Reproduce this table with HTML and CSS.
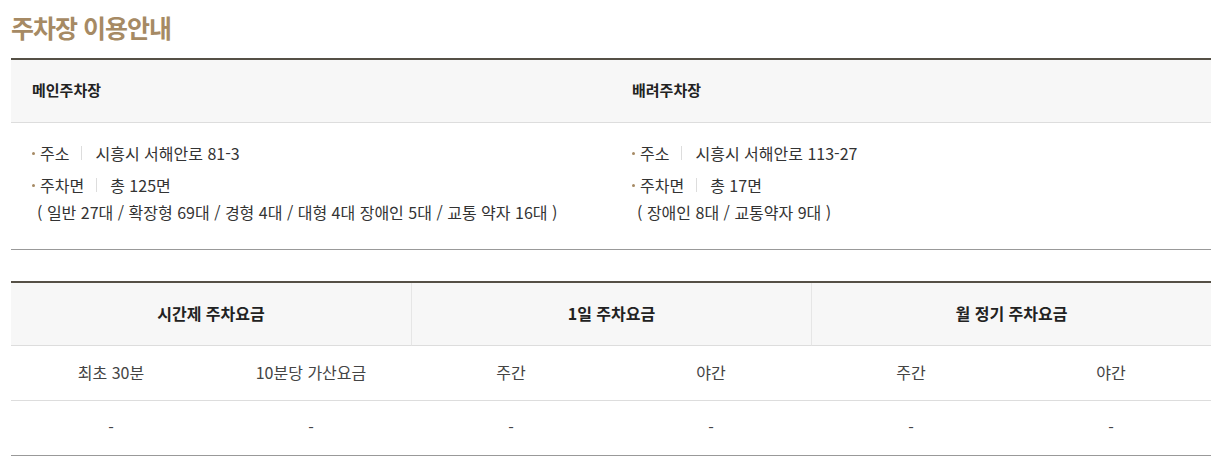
FILE: index.html
```html
<!DOCTYPE html>
<html lang="ko">
<head>
<meta charset="utf-8">
<title>주차장 이용안내</title>
<link rel="stylesheet" href="styles.css">
</head>
<body>
<div class="page">
  <h2 class="title">주차장 이용안내</h2>

  <div class="lots">
    <div class="lot-head">메인주차장</div>
    <div class="lot-head">배려주차장</div>
    <div class="lot-body">
      <ul class="info">
        <li><span class="label">주소</span><span class="bar"></span><span class="value">시흥시 서해안로 81-3</span></li>
        <li><span class="label">주차면</span><span class="bar"></span><span class="value">총 125면</span></li>
      </ul>
      <p class="note">( 일반 27대 / 확장형 69대 / 경형 4대 / 대형 4대 장애인 5대 / 교통 약자 16대 )</p>
    </div>
    <div class="lot-body">
      <ul class="info">
        <li><span class="label">주소</span><span class="bar"></span><span class="value">시흥시 서해안로 113-27</span></li>
        <li><span class="label">주차면</span><span class="bar"></span><span class="value">총 17면</span></li>
      </ul>
      <p class="note">( 장애인 8대 / 교통약자 9대 )</p>
    </div>
  </div>

  <div class="fees">
    <div class="fee-head">시간제 주차요금</div>
    <div class="fee-head">1일 주차요금</div>
    <div class="fee-head">월 정기 주차요금</div>
    <div class="fee-sub">최초 30분</div>
    <div class="fee-sub">10분당 가산요금</div>
    <div class="fee-sub">주간</div>
    <div class="fee-sub">야간</div>
    <div class="fee-sub">주간</div>
    <div class="fee-sub">야간</div>
    <div class="fee-cell">-</div>
    <div class="fee-cell">-</div>
    <div class="fee-cell">-</div>
    <div class="fee-cell">-</div>
    <div class="fee-cell">-</div>
    <div class="fee-cell">-</div>
  </div>
</div>
</body>
</html>
```

FILE: styles.css
```css
* { box-sizing: border-box; }
html, body { margin: 0; padding: 0; background: #fff; }
body {
  font-family: "Noto Sans CJK KR", "Noto Sans", sans-serif;
  color: #333;
  font-size: 16px;
}
.page {
  width: 1200px;
  margin-left: 11px;
  padding-top: 8px;
}
.title {
  margin: 0;
  font-size: 25px;
  font-weight: 700;
  letter-spacing: -1px;
  color: #a68a64;
  line-height: 38px;
  height: 50px;
}
.lots {
  display: grid;
  grid-template-columns: 600px 600px;
  border-top: 2px solid #555046;
  border-bottom: 1px solid #999;
}
.lot-head {
  background: #f7f7f7;
  height: 63px;
  border-bottom: 1px solid #ddd;
  padding: 0 0 4px 21px;
  display: flex;
  align-items: center;
  font-weight: 700;
  color: #222;
  font-size: 15px;
}
.lot-body {
  padding: 14px 0 26px 18px;
}
.info {
  list-style: none;
  margin: 0;
  padding: 0;
}
.info li {
  display: flex;
  align-items: center;
  height: 32px;
  line-height: 22px;
}
.info li::before {
  content: "";
  width: 3px;
  height: 3px;
  border-radius: 50%;
  background: #a68a64;
  margin: 0 5px 0 3px;
}
.bar {
  width: 1px;
  height: 14px;
  background: #ddd;
  margin: 0 13px 0 12px;
}
.note {
  margin: 0;
  padding-left: 8px;
  line-height: 22px;
}
.fees {
  margin-top: 31px;
  display: grid;
  grid-template-columns: repeat(6, 200px);
  border-top: 2px solid #555046;
  border-bottom: 1px solid #999;
}
.fee-head {
  grid-column: span 2;
  background: #f7f7f7;
  height: 63px;
  padding-bottom: 3px;
  border-bottom: 1px solid #ddd;
  display: flex;
  align-items: center;
  justify-content: center;
  font-weight: 700;
  color: #222;
}
.fee-head + .fee-head {
  border-left: 1px solid #e6e6e6;
}
.fee-sub, .fee-cell {
  height: 55px;
  padding-bottom: 2px;
  display: flex;
  align-items: center;
  justify-content: center;
  color: #444;
}
.fee-sub { border-bottom: 1px solid #ddd; }
.fee-cell { height: 54px; }
```
